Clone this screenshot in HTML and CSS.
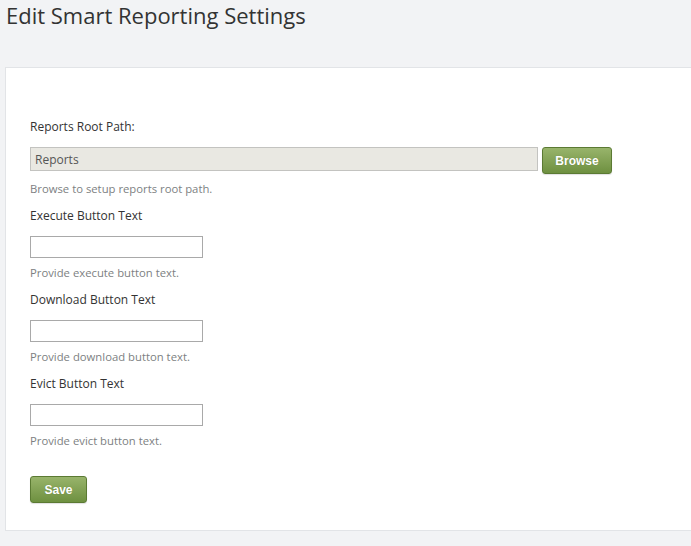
FILE: index.html
```html
<!DOCTYPE html>
<html lang="en">
<head>
<meta charset="utf-8">
<title>Edit Smart Reporting Settings</title>
<link rel="stylesheet" href="styles.css">
</head>
<body>
<h1 class="page-title">Edit Smart Reporting Settings</h1>
<div class="card">
  <div class="field">
    <label class="field-label">Reports Root Path:</label>
    <div class="path-row">
      <input class="path-input" type="text" value="Reports" readonly>
      <button class="btn btn-browse" type="button">Browse</button>
    </div>
    <div class="help">Browse to setup reports root path.</div>
  </div>
  <div class="field">
    <label class="field-label">Execute Button Text</label>
    <input class="text-input" type="text">
    <div class="help">Provide execute button text.</div>
  </div>
  <div class="field">
    <label class="field-label">Download Button Text</label>
    <input class="text-input" type="text">
    <div class="help">Provide download button text.</div>
  </div>
  <div class="field">
    <label class="field-label">Evict Button Text</label>
    <input class="text-input" type="text">
    <div class="help">Provide evict button text.</div>
  </div>
  <button class="btn btn-save" type="button">Save</button>
</div>
</body>
</html>
```

FILE: styles.css
```css
html, body {
  margin: 0;
  padding: 0;
  overflow: hidden;
}
body {
  background: #f2f3f5;
  font-family: "Open Sans", "Noto Sans", sans-serif;
  color: #333;
  width: 691px;
  height: 546px;
}
.page-title {
  margin: 0;
  padding: 0 6px;
  font-size: 22px;
  line-height: 30px;
  font-weight: 400;
  color: #333;
}
.card {
  margin: 37px -20px 0 5px;
  background: #fff;
  border: 1px solid #e2e4e7;
  padding: 50px 24px 27px;
}
.field {
  display: flex;
  flex-direction: column;
  align-items: flex-start;
  margin-bottom: 10px;
}
.field-label {
  font-size: 12px;
  line-height: 18px;
  color: #333;
  margin-bottom: 11px;
}
.path-row {
  display: flex;
  align-items: flex-start;
  gap: 4px;
}
.path-input {
  box-sizing: border-box;
  width: 508px;
  height: 24px;
  margin: 0;
  border: 1px solid #c3c3c0;
  background: #e9e8e2;
  color: #555;
  font-family: inherit;
  font-size: 12px;
  padding: 0 4px;
  outline: none;
}
.text-input {
  box-sizing: border-box;
  width: 173px;
  height: 22px;
  margin: 0;
  border: 1px solid #a9a9a9;
  background: #fff;
  padding: 0 4px;
  outline: none;
}
.help {
  font-size: 11.3px;
  line-height: 16px;
  color: #7d7f82;
  margin-top: 7px;
}
.btn {
  box-sizing: border-box;
  height: 27px;
  margin: 0;
  border: 1px solid #5b7a33;
  border-radius: 3px;
  background: linear-gradient(#98b46b, #6e9040);
  color: #fff;
  font-family: "Liberation Sans", Arial, sans-serif;
  font-size: 12px;
  font-weight: 700;
  text-shadow: 0 0 1px rgba(40,60,20,0.3);
  box-shadow: 0 1px 1px rgba(0,0,0,0.12);
  padding: 0;
  cursor: pointer;
}
.btn-browse {
  width: 70px;
}
.btn-save {
  width: 57px;
  margin-top: 17px;
}
```
